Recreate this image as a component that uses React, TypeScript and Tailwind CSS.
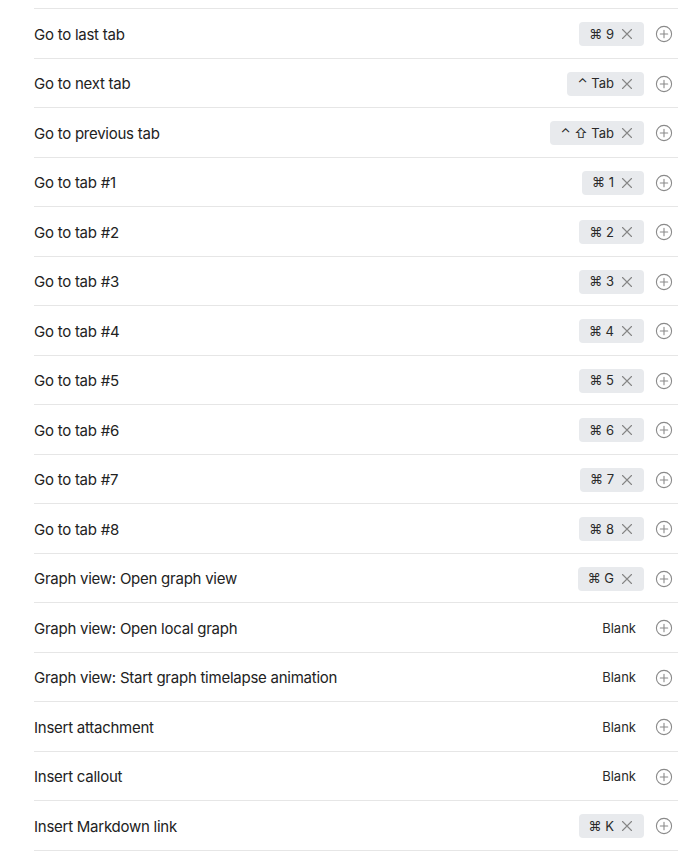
import React from "react";

type Row = { label: string; keys?: string };

const rows: Row[] = [
  { label: "Go to last tab", keys: "⌘ 9" },
  { label: "Go to next tab", keys: "⌃ Tab" },
  { label: "Go to previous tab", keys: "⌃ ⇧ Tab" },
  { label: "Go to tab #1", keys: "⌘ 1" },
  { label: "Go to tab #2", keys: "⌘ 2" },
  { label: "Go to tab #3", keys: "⌘ 3" },
  { label: "Go to tab #4", keys: "⌘ 4" },
  { label: "Go to tab #5", keys: "⌘ 5" },
  { label: "Go to tab #6", keys: "⌘ 6" },
  { label: "Go to tab #7", keys: "⌘ 7" },
  { label: "Go to tab #8", keys: "⌘ 8" },
  { label: "Graph view: Open graph view", keys: "⌘ G" },
  { label: "Graph view: Open local graph" },
  { label: "Graph view: Start graph timelapse animation" },
  { label: "Insert attachment" },
  { label: "Insert callout" },
  { label: "Insert Markdown link", keys: "⌘ K" },
];

function XIcon() {
  return (
    <svg width="12" height="12" viewBox="0 0 12 12" className="ml-[7px]">
      <path d="M1.5 1.5 L10.5 10.5 M10.5 1.5 L1.5 10.5" stroke="#858585" strokeWidth="1.1" strokeLinecap="round" />
    </svg>
  );
}

function PlusIcon() {
  return (
    <svg width="18" height="18" viewBox="0 0 18 18">
      <circle cx="9" cy="9" r="7.6" fill="none" stroke="#8a8a8a" strokeWidth="1.1" />
      <path d="M9 5.3 V12.7 M5.3 9 H12.7" stroke="#8a8a8a" strokeWidth="1.1" strokeLinecap="round" />
    </svg>
  );
}

export default function App() {
  return (
    <div
      className="w-[693px] h-[856px] overflow-hidden bg-white pt-[8px] pl-[34px] pr-[15px]"
      style={{ fontFamily: "Inter, 'DejaVu Sans', sans-serif" }}
    >
      <div className="border-b border-[#e6e6e6]">
        {rows.map((r, i) => (
          <div
            key={i}
            className="flex items-center justify-between h-[49.5px] pt-[2px] border-t border-[#e6e6e6]"
          >
            <span className="pt-[1px] text-[15px] text-[#222222] tracking-[-0.25px]">{r.label}</span>
            <div className="flex items-center pr-[5px]">
              {r.keys ? (
                <span className="flex items-center h-[24px] rounded-[4px] bg-[#e8eaed] pl-[10px] pr-[11px] text-[13px] text-[#2a2a2a]">
                  <span>{r.keys}</span>
                  <XIcon />
                </span>
              ) : (
                <span className="text-[13px] text-[#2a2a2a] mr-[8px]">Blank</span>
              )}
              <span className="ml-[11px] flex items-center">
                <PlusIcon />
              </span>
            </div>
          </div>
        ))}
      </div>
    </div>
  );
}
